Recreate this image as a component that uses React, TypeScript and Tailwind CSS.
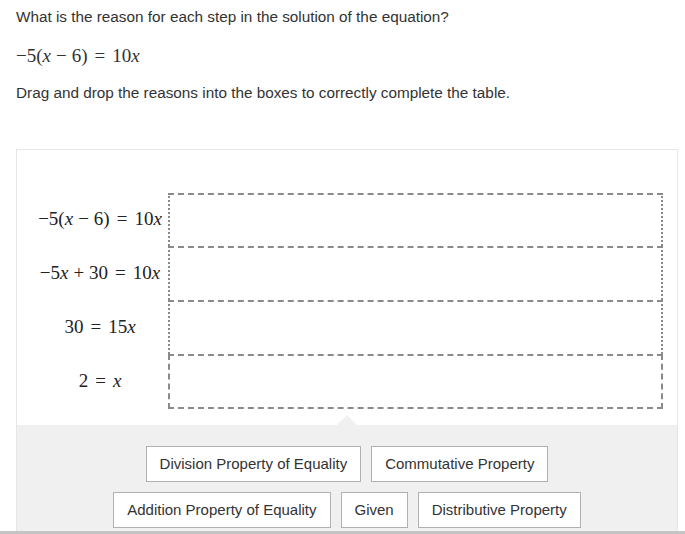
import React from "react"

const mathFont = "font-['Liberation_Serif','DejaVu_Serif',serif]"

function V({ children }: { children: React.ReactNode }) {
  return <span className="italic">{children}</span>
}

function Op({ children, wide }: { children: React.ReactNode; wide?: boolean }) {
  return <span className={wide ? "mx-[7px]" : "mx-[5px]"}>{children}</span>
}

function Eq1() {
  return (
    <span className={mathFont}>
      −5(<V>x</V>
      <Op>−</Op>6)
      <Op wide>=</Op>10<V>x</V>
    </span>
  )
}

const steps: React.ReactNode[] = [
  <Eq1 key="a" />,
  <span key="b" className={mathFont}>
    −5<V>x</V>
    <Op>+</Op>30
    <Op wide>=</Op>10<V>x</V>
  </span>,
  <span key="c" className={mathFont}>
    30
    <Op wide>=</Op>15<V>x</V>
  </span>,
  <span key="d" className={mathFont}>
    2<Op wide>=</Op>
    <V>x</V>
  </span>,
]

const reasonsTop = ["Division Property of Equality", "Commutative Property"]
const reasonsBottom = ["Addition Property of Equality", "Given", "Distributive Property"]

function Chip({ label }: { label: string }) {
  return (
    <div className="h-[36px] flex items-center px-[13px] bg-white border border-[#b0b0b0] text-[15px] text-[#333] whitespace-nowrap">
      {label}
    </div>
  )
}

export default function App() {
  return (
    <div className="relative w-[685px] h-[534px] overflow-hidden bg-white text-[#333] font-['Liberation_Sans',Arial,sans-serif]">
      <div className="px-4 pt-[7px]">
        <p className="text-[15.3px] leading-[20px]">What is the reason for each step in the solution of the equation?</p>
        <div className="mt-[17px] h-[24px] text-[19px] leading-[24px]">
          <Eq1 />
        </div>
        <p className="mt-[15px] text-[15.3px] leading-[20px]">Drag and drop the reasons into the boxes to correctly complete the table.</p>
      </div>

      <div className="ml-4 mr-[7px] mt-[46px] border border-b-0 border-[#e6e6e6]">
        <div className="pt-[43px] pb-[16px] pl-[15px] pr-[14px]">
          {steps.map((s, i) => {
            const last = i === steps.length - 1
            return (
              <div key={i} className="flex">
                <div className="w-[136px] flex items-center justify-center text-[19px] text-[#222]">{s}</div>
                <div
                  className={
                    last
                      ? "flex-1 h-[55px] border-2 border-dashed border-[#8a8a8a]"
                      : i === 0
                        ? "flex-1 h-[53px] border-t-2 border-x-2 border-[#8a8a8a] border-dotted [border-top-style:dashed]"
                        : "flex-1 h-[54px] border-t-2 border-x-2 border-[#8a8a8a] border-dotted [border-top-style:dashed]"
                  }
                />
              </div>
            )
          })}
        </div>

        <div className="relative bg-[#f0f0f0] h-[106px] pt-[21px] flex flex-col items-center gap-[10px]">
          <div className="absolute left-[320px] -top-[10px] w-0 h-0 border-x-[10px] border-x-transparent border-b-[10px] border-b-[#f0f0f0]" />
          <div className="flex gap-[10px]">
            {reasonsTop.map((r) => (
              <Chip key={r} label={r} />
            ))}
          </div>
          <div className="flex gap-[10px]">
            {reasonsBottom.map((r) => (
              <Chip key={r} label={r} />
            ))}
          </div>
        </div>
      </div>

      <div className="absolute left-0 right-0 bottom-0 h-[3px] bg-[#c4c4c4]" />
    </div>
  )
}
